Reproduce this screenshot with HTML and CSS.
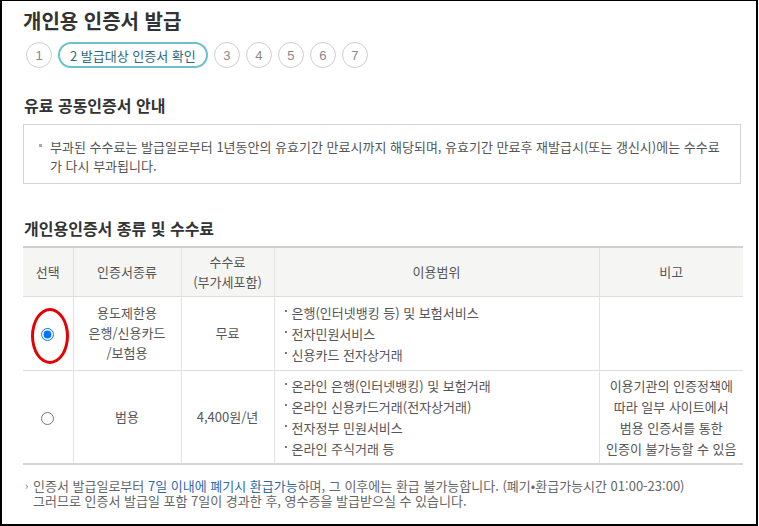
FILE: index.html
```html
<!DOCTYPE html>
<html lang="ko">
<head>
<meta charset="utf-8">
<title>개인용 인증서 발급</title>
<link rel="stylesheet" href="styles.css">
</head>
<body>
<div class="page">
  <h1 class="title">개인용 인증서 발급</h1>
  <ol class="steps">
    <li class="step">1</li>
    <li class="step active">2 발급대상 인증서 확인</li>
    <li class="step">3</li>
    <li class="step">4</li>
    <li class="step">5</li>
    <li class="step">6</li>
    <li class="step">7</li>
  </ol>

  <h2 class="sec">유료 공동인증서 안내</h2>
  <div class="notice">
    <span class="sq"></span>
    <p class="notice-text">부과된 수수료는 발급일로부터 1년동안의 유효기간 만료시까지 해당되며, 유효기간 만료후 재발급시(또는 갱신시)에는 수수료가 다시 부과됩니다.</p>
  </div>

  <h2 class="sec sec2">개인용인증서 종류 및 수수료</h2>
  <table class="fees">
    <colgroup>
      <col class="c1"><col class="c2"><col class="c3"><col class="c4"><col class="c5">
    </colgroup>
    <thead>
      <tr>
        <th>선택</th>
        <th>인증서종류</th>
        <th>수수료<br>(부가세포함)</th>
        <th>이용범위</th>
        <th>비고</th>
      </tr>
    </thead>
    <tbody>
      <tr class="r1">
        <td class="sel"><span class="mark"></span><input type="radio" name="cert" checked></td>
        <td>용도제한용<br>은행/신용카드<br>/보험용</td>
        <td>무료</td>
        <td class="uses">
          <ul>
            <li>은행(인터넷뱅킹 등) 및 보험서비스</li>
            <li>전자민원서비스</li>
            <li>신용카드 전자상거래</li>
          </ul>
        </td>
        <td></td>
      </tr>
      <tr class="r2">
        <td class="sel"><input type="radio" name="cert"></td>
        <td>범용</td>
        <td>4,400원/년</td>
        <td class="uses">
          <ul>
            <li>온라인 은행(인터넷뱅킹) 및 보험거래</li>
            <li>온라인 신용카드거래(전자상거래)</li>
            <li>전자정부 민원서비스</li>
            <li>온라인 주식거래 등</li>
          </ul>
        </td>
        <td class="memo">이용기관의 인증정책에<br>따라 일부 사이트에서<br>범용 인증서를 통한<br>인증이 불가능할 수 있음</td>
      </tr>
    </tbody>
  </table>

  <div class="note">
    <span class="gt">›</span>
    <div class="note-lines">
      <p>인증서 발급일로부터 <span class="blue">7일 이내에 폐기시 환급가능</span>하며, 그 이후에는 환급 불가능합니다. (폐기•환급가능시간 01:00-23:00)</p>
      <p>그러므로 인증서 발급일 포함 7일이 경과한 후, 영수증을 발급받으실 수 있습니다.</p>
    </div>
  </div>
</div>
</body>
</html>
```

FILE: styles.css
```css
* { box-sizing: border-box; }
html, body { margin: 0; padding: 0; background: #fff; }
body {
  font-family: "Noto Sans CJK KR", "Noto Sans", sans-serif;
  color: #555;
  font-size: 13px;
}
.page {
  width: 758px;
  height: 526px;
  border-left: 2px solid #000;
  border-top: 1px solid #000;
  border-right: 2px solid #000;
  border-bottom: 2px solid #000;
  padding: 6px 15px 0 21px;
  overflow: hidden;
}
.title {
  margin: 0;
  font-size: 20px;
  line-height: 28px;
  font-weight: bold;
  color: #333;
}
.steps {
  list-style: none;
  margin: 7px 0 0 3px;
  padding: 0;
  display: flex;
  gap: 6px;
}
.step {
  width: 26px;
  height: 26px;
  border: 1px solid #d0d0d0;
  border-radius: 13px;
  display: flex;
  align-items: center;
  justify-content: center;
  color: #888;
  font-family: "Liberation Sans", "Noto Sans CJK KR", sans-serif;
  font-size: 13px;
}
.step.active {
  width: auto;
  padding: 0 10px;
  border: 2px solid #6cbfcf;
  color: #2c6a80;
  font-family: "Noto Sans CJK KR", sans-serif;
  font-size: 13px;
}
.sec {
  margin: 26px 0 0 1px;
  font-size: 16px;
  line-height: 22px;
  font-weight: bold;
  color: #333;
}
.notice {
  margin-top: 8px;
  border: 1px solid #d4d4d4;
  display: flex;
  padding: 12px 20px 8px 15px;
}
.sq {
  flex: none;
  width: 3px;
  height: 3px;
  background: #aaa;
  margin: 7px 8px 0 0;
}
.notice-text {
  margin: 0;
  line-height: 19px;
  color: #555;
}
.sec2 { margin-top: 33px; }
.fees {
  margin-top: 7px;
  width: 720px;
  border-collapse: collapse;
  table-layout: fixed;
  border-top: 2px solid #d0d0d0;
  border-bottom: 2px solid #d6d6d6;
}
.c1 { width: 50px; }
.c2 { width: 108px; }
.c3 { width: 93px; }
.c4 { width: 325px; }
.c5 { width: 144px; }
.fees th, .fees td {
  border-left: 1px solid #e2e2e2;
  border-bottom: 1px solid #dedede;
  text-align: center;
  vertical-align: middle;
  font-weight: normal;
  color: #555;
  padding: 0 4px;
}
.fees th:first-child, .fees td:first-child { border-left: none; }
.fees th {
  background: #f5f5f3;
  height: 49px;
  line-height: 20px;
}
.r1 td { height: 74px; line-height: 20px; }
.r2 td { height: 94px; line-height: 21px; }
.fees td.uses { text-align: left; padding-left: 9px; }
.uses ul { list-style: none; margin: 0; padding: 0; }
.r1 .uses li { line-height: 21px; }
.uses li { position: relative; padding-left: 8px; }
.uses li::before {
  content: "";
  position: absolute;
  left: 1px;
  top: 8px;
  width: 2px;
  height: 2px;
  background: #777;
}
.sel { position: relative; }
.sel input {
  margin: 0;
  width: 13px;
  height: 13px;
  vertical-align: middle;
}
.mark {
  position: absolute;
  left: 8px;
  top: 11px;
  width: 38px;
  height: 56px;
  border: 3px solid #e60000;
  border-radius: 50%;
}
.memo { line-height: 21px; }
.note {
  margin-top: 13px;
  display: flex;
  color: #666;
  font-size: 13px;
}
.gt {
  flex: none;
  width: 8px;
  margin-left: 2px;
  line-height: 15px;
  font-size: 11px;
  color: #777;
}
.note-lines p {
  margin: 0;
  height: 15px;
  line-height: 15px;
}
.blue { color: #2f6aa8; }
```
